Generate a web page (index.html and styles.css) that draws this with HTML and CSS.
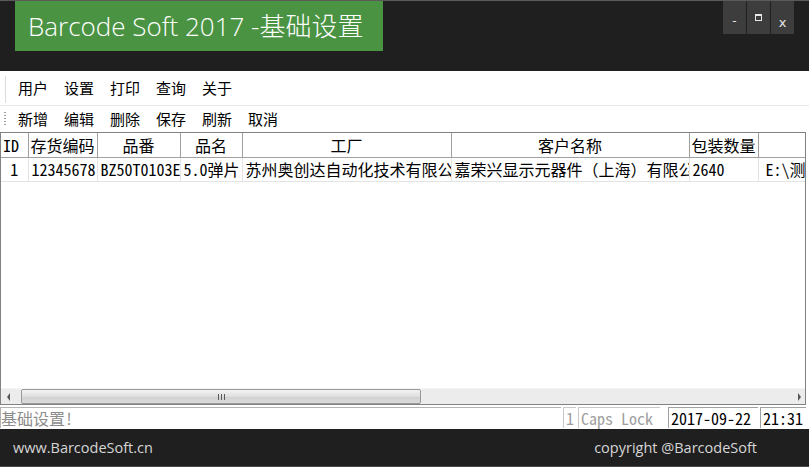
FILE: index.html
```html
<!DOCTYPE html>
<html lang="zh-CN">
<head>
  <meta charset="UTF-8" />
  <title>Barcode Soft 2017 - 基础设置</title>
  <link rel="stylesheet" href="styles.css">
</head>
<body>
  <div class="window">
    <!-- Title bar -->
    <div class="titlebar">
      <div class="brand">Barcode Soft 2017 -基础设置</div>
      <div class="winbtns">
        <div class="winbtn btn-min">-</div>
        <div class="winbtn btn-max"><span class="maxbox"></span></div>
        <div class="winbtn btn-close">x</div>
      </div>
    </div>

    <!-- Menu -->
    <div class="menubar">
      <span class="grip-line"></span>
      <span class="menu-item">用户</span>
      <span class="menu-item">设置</span>
      <span class="menu-item">打印</span>
      <span class="menu-item">查询</span>
      <span class="menu-item">关于</span>
    </div>

    <!-- Toolbar -->
    <div class="toolbar">
      <span class="grip-dots"></span>
      <span class="tool-item">新增</span>
      <span class="tool-item">编辑</span>
      <span class="tool-item">删除</span>
      <span class="tool-item">保存</span>
      <span class="tool-item">刷新</span>
      <span class="tool-item">取消</span>
    </div>

    <!-- Data grid -->
    <div class="grid">
      <div class="grid-body">
        <table class="data">
          <colgroup>
            <col class="c-id">
            <col class="c-code">
            <col class="c-part">
            <col class="c-name">
            <col class="c-factory">
            <col class="c-customer">
            <col class="c-qty">
            <col class="c-path">
          </colgroup>
          <thead>
            <tr>
              <th class="left">ID</th>
              <th class="left">存货编码</th>
              <th>品番</th>
              <th>品名</th>
              <th>工厂</th>
              <th>客户名称</th>
              <th class="left">包装数量</th>
              <th></th>
            </tr>
          </thead>
          <tbody>
            <tr>
              <td class="center">1</td>
              <td>12345678</td>
              <td>BZ50T0103E</td>
              <td>5.0弹片</td>
              <td>苏州奥创达自动化技术有限公司</td>
              <td>嘉荣兴显示元器件（上海）有限公司</td>
              <td>2640</td>
              <td class="path">E:\测试\条码</td>
            </tr>
          </tbody>
        </table>
      </div>
      <div class="hscroll">
        <span class="arrow arrow-left"></span>
        <div class="track">
          <div class="thumb"><span class="thumb-grip"></span></div>
        </div>
        <span class="arrow arrow-right"></span>
      </div>
    </div>

    <!-- Status bar -->
    <div class="statusbar">
      <span class="status-msg">基础设置!</span>
      <span class="panel dim">1</span>
      <span class="panel dim caps">Caps Lock</span>
      <span class="panel-gap"></span>
      <span class="panel date">2017-09-22</span>
      <span class="panel time">21:31</span>
    </div>

    <!-- Footer -->
    <div class="footer">
      <span class="site">www.BarcodeSoft.cn</span>
      <span class="copy">copyright @BarcodeSoft</span>
    </div>
  </div>
</body>
</html>
```

FILE: styles.css
```css
/* Basic Reset */
* {
  box-sizing: border-box;
  margin: 0;
  padding: 0;
}
body {
  font-family: "Noto Sans CJK SC", sans-serif;
  background-color: #1f1f1f;
}
.window {
  width: 809px;
  height: 467px;
  display: flex;
  flex-direction: column;
  background-color: #fff;
  overflow: hidden;
}

/* Title bar */
.titlebar {
  height: 71px;
  background-color: #1f1f1f;
  border-top: 1px solid #5a5a5a;
  display: flex;
  justify-content: space-between;
  align-items: flex-start;
  padding: 0 15px;
}
.brand {
  width: 368px;
  height: 50px;
  background-color: #4a9343;
  color: #fff;
  font-family: "Open Sans", "Noto Sans CJK SC", sans-serif;
  font-size: 26px;
  font-weight: 300;
  line-height: 50px;
  padding-left: 13px;
  white-space: nowrap;
}
.winbtns {
  display: flex;
  gap: 1px;
}
.winbtn {
  width: 23px;
  height: 33px;
  background-color: #3d3d3d;
  color: #e8e8e8;
  font-family: "DejaVu Sans", sans-serif;
  font-size: 12px;
  text-align: center;
}
.btn-min {
  line-height: 40px;
}
.btn-close {
  font-size: 13px;
  line-height: 44px;
}
.maxbox {
  display: inline-block;
  width: 7px;
  height: 7px;
  border: 1px solid #e8e8e8;
  border-top-width: 2px;
  margin-top: 13px;
}

/* Menu and toolbar */
.menubar {
  height: 35px;
  display: flex;
  align-items: center;
  padding-left: 18px;
  gap: 16px;
  position: relative;
  border-bottom: 1px solid #e6e6e6;
}
.grip-line {
  position: absolute;
  left: 5px;
  top: 5px;
  bottom: 2px;
  width: 1px;
  background-color: #dcdcdc;
}
.toolbar {
  height: 26px;
  display: flex;
  align-items: center;
  padding-left: 18px;
  gap: 16px;
  position: relative;
}
.grip-dots {
  position: absolute;
  left: 4px;
  top: 6px;
  width: 2px;
  height: 15px;
  background-image: linear-gradient(#9a9a9a 50%, transparent 50%);
  background-size: 2px 3px;
}
.menu-item,
.tool-item {
  font-size: 15px;
  color: #000;
  line-height: 20px;
}

/* Grid */
.grid {
  height: 273px;
  width: 806px;
  border: 1px solid #828282;
  display: flex;
  flex-direction: column;
}
.grid-body {
  flex: 1;
  overflow: hidden;
}
.data {
  table-layout: fixed;
  width: 856px;
  border-collapse: collapse;
  font-family: "Noto Sans Mono CJK SC", "Noto Sans CJK SC", monospace;
  font-size: 16px;
  color: #000;
}
.c-id { width: 27px; }
.c-code { width: 69px; }
.c-part { width: 83px; }
.c-name { width: 62px; }
.c-factory { width: 209px; }
.c-customer { width: 238px; }
.c-qty { width: 69px; }
.c-path { width: 99px; }
.data th {
  height: 24px;
  font-weight: normal;
  text-align: center;
  border-right: 1px solid #a0a0a0;
  border-bottom: 1px solid #a0a0a0;
  white-space: nowrap;
  overflow: hidden;
  padding: 0 2px;
  line-height: 22px;
}
.data th.left {
  text-align: left;
}
.data td {
  height: 24px;
  border-right: 1px solid #e3e3e3;
  border-bottom: 1px solid #e3e3e3;
  white-space: nowrap;
  overflow: hidden;
  padding: 0 3px;
  line-height: 22px;
}
.data td.center {
  text-align: center;
}
.data td.path {
  padding-left: 7px;
}

/* Horizontal scrollbar */
.hscroll {
  height: 16px;
  display: flex;
  align-items: center;
  background-color: #ececec;
  border-top: 1px solid #f4f4f4;
}
.arrow {
  width: 18px;
  height: 15px;
  position: relative;
}
.arrow::before {
  content: "";
  position: absolute;
  top: 4px;
  border-top: 4px solid transparent;
  border-bottom: 4px solid transparent;
}
.arrow-left::before {
  left: 6px;
  border-right: 3px solid #555;
}
.arrow-right::before {
  right: 4px;
  border-left: 3px solid #555;
}
.track {
  flex: 1;
  height: 15px;
}
.thumb {
  width: 400px;
  height: 15px;
  margin-left: 2px;
  border: 1px solid #999;
  border-radius: 2px;
  background: linear-gradient(#f3f3f3, #dedede 50%, #d0d0d0 51%, #dcdcdc);
  display: flex;
  align-items: center;
  justify-content: center;
}
.thumb-grip {
  width: 7px;
  height: 6px;
  background-image: linear-gradient(90deg, #5a5a5a 1px, transparent 1px);
  background-size: 3px 6px;
}

/* Status bar */
.statusbar {
  height: 24px;
  display: flex;
  align-items: flex-end;
  padding-bottom: 1px;
  font-family: "Noto Sans Mono CJK SC", "Noto Sans CJK SC", monospace;
  font-size: 16px;
}
.status-msg {
  flex: 1;
  color: #8c8c8c;
  border-top: 1px solid #b4b4b4;
  border-left: 1px solid #b4b4b4;
  height: 21px;
  line-height: 20px;
  white-space: nowrap;
}
.panel {
  height: 21px;
  line-height: 20px;
  padding: 0 2px;
  border-top: 1px solid #a0a0a0;
  border-left: 1px solid #a0a0a0;
  margin-left: 2px;
  white-space: nowrap;
  color: #000;
}
.panel.dim {
  color: #a0a0a0;
  border-color: #c8c8c8;
}
.caps {
  width: 82px;
}
.panel-gap {
  width: 6px;
}
.date {
  width: 90px;
}
.time {
  width: 46px;
  margin-right: 3px;
}

/* Footer */
.footer {
  flex: 1;
  background-color: #1f1f1f;
  border-bottom: 1px solid #4a4a4a;
  display: flex;
  justify-content: space-between;
  align-items: center;
  padding: 0 52px 0 13px;
  font-family: "Open Sans", sans-serif;
  font-size: 14.5px;
  color: #d6d6d6;
}
```
